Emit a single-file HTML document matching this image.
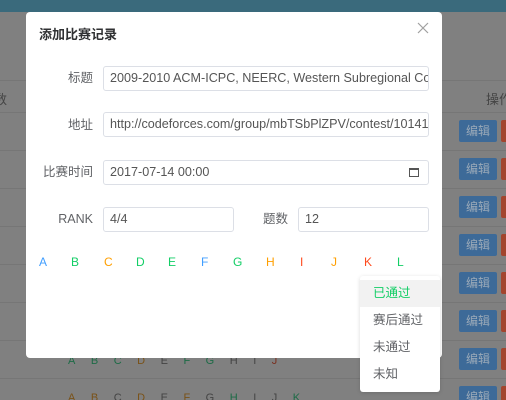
<!DOCTYPE html>
<html><head><meta charset="utf-8"><style>
*{box-sizing:border-box;margin:0;padding:0}
html,body{width:506px;height:400px;overflow:hidden}
body{background:#808080;font-family:"Liberation Sans","Noto Sans CJK SC",sans-serif;position:relative}
.top{position:absolute;left:0;top:0;width:506px;height:12px;background:#3a6a7c}
.line{position:absolute;left:0;width:506px;height:1px;background:#767676}
.btn{position:absolute;left:459px;width:38px;height:22px;background:#3d6a98;border-radius:2px;color:#9aa9b8;font-size:12px;text-align:center;line-height:22px}
.red{position:absolute;left:501px;width:10px;height:22px;background:#a3452e;border-radius:2px}
.bg{position:absolute;font-size:13px;color:#444;white-space:nowrap}
.modal{position:absolute;left:26px;top:12px;width:416px;height:346px;background:#fff;border-radius:4px}
.title{position:absolute;left:13px;top:12px;font-size:13px;font-weight:bold;color:#303133}
.close{position:absolute;left:390px;top:9px;width:14px;height:14px}
.lbl{position:absolute;font-size:12.5px;color:#606266;text-align:right;white-space:nowrap;line-height:16px}
.inp{position:absolute;height:25px;border:1px solid #dcdfe6;border-radius:3px;font-size:12.6px;color:#555;padding-left:6px;line-height:23px;white-space:nowrap;overflow:hidden}
.lt{position:absolute;top:243px;font-size:12px}
.dd{position:absolute;left:360px;top:276px;width:80px;height:116px;background:#fff;border-radius:3px;box-shadow:0 1px 4px rgba(0,0,0,.15)}
.dd div{height:27px;line-height:27px;padding-left:13px;font-size:12.5px;color:#606266}
</style></head><body>
<div class="top"></div>
<div class="line" style="top:80px"></div>
<div class="line" style="top:112px"></div>
<div class="line" style="top:150px"></div>
<div class="line" style="top:188px"></div>
<div class="line" style="top:226px"></div>
<div class="line" style="top:264px"></div>
<div class="line" style="top:302px"></div>
<div class="line" style="top:340px"></div>
<div class="line" style="top:378px"></div>
<div class="bg" style="left:-6px;top:89px">数</div>
<div class="bg" style="left:486px;top:89px">操作</div>
<div class="btn" style="top:120px">编辑</div><div class="red" style="top:120px"></div>
<div class="btn" style="top:158px">编辑</div><div class="red" style="top:158px"></div>
<div class="btn" style="top:196px">编辑</div><div class="red" style="top:196px"></div>
<div class="btn" style="top:234px">编辑</div><div class="red" style="top:234px"></div>
<div class="btn" style="top:272px">编辑</div><div class="red" style="top:272px"></div>
<div class="btn" style="top:310px">编辑</div><div class="red" style="top:310px"></div>
<div class="btn" style="top:348px">编辑</div><div class="red" style="top:348px"></div>
<div class="btn" style="top:386px">编辑</div><div class="red" style="top:386px"></div>
<div class="bg" style="left:68px;top:355px;font-size:11px;letter-spacing:15.5px"><span style="color:#1d6b46">A</span><span style="color:#1d6b46">B</span><span style="color:#1d6b46">C</span><span style="color:#7a5218">D</span><span>E</span><span style="color:#1d6b46">F</span><span style="color:#1d6b46">G</span><span>H</span><span>I</span><span style="color:#7a3020">J</span></div>
<div class="bg" style="left:68px;top:392px;font-size:11px;letter-spacing:15.5px"><span style="color:#7a5218">A</span><span style="color:#7a5218">B</span><span>C</span><span style="color:#7a5218">D</span><span>E</span><span style="color:#7a5218">F</span><span>G</span><span style="color:#1d6b46">H</span><span>I</span><span>J</span><span style="color:#1d6b46">K</span></div>
<div class="modal">
<div class="title">添加比赛记录</div>
<svg class="close" viewBox="0 0 14 14"><path d="M2 2L12 12M12 2L2 12" stroke="#a0a0a0" stroke-width="1.2"/></svg>
<div class="lbl" style="left:0;top:58px;width:67px">标题</div>
<div class="inp" style="left:77px;top:54px;width:326px">2009-2010 ACM-ICPC, NEERC, Western Subregional Contest</div>
<div class="lbl" style="left:0;top:105px;width:67px">地址</div>
<div class="inp" style="left:77px;top:100px;width:326px">http://codeforces.com/group/mbTSbPlZPV/contest/101411</div>
<div class="lbl" style="left:0;top:152px;width:67px">比赛时间</div>
<div class="inp" style="left:77px;top:148px;width:326px">2017-07-14 00:00<span style="position:absolute;right:9px;top:7px;width:10px;height:9px;border:1px solid #555;border-top-width:2px"></span></div>
<div class="lbl" style="left:0;top:199px;width:67px">RANK</div>
<div class="inp" style="left:77px;top:195px;width:131px">4/4</div>
<div class="lbl" style="left:200px;top:199px;width:62px">题数</div>
<div class="inp" style="left:272px;top:195px;width:131px">12</div>
<div class="lt" style="left:13px;color:#409eff">A</div>
<div class="lt" style="left:45px;color:#13ce66">B</div>
<div class="lt" style="left:78px;color:#ff9f00">C</div>
<div class="lt" style="left:110px;color:#13ce66">D</div>
<div class="lt" style="left:142px;color:#13ce66">E</div>
<div class="lt" style="left:175px;color:#409eff">F</div>
<div class="lt" style="left:207px;color:#13ce66">G</div>
<div class="lt" style="left:240px;color:#ff9f00">H</div>
<div class="lt" style="left:274px;color:#ff4a1d">I</div>
<div class="lt" style="left:305px;color:#ff9f00">J</div>
<div class="lt" style="left:338px;color:#ff4a1d">K</div>
<div class="lt" style="left:371px;color:#13ce66">L</div>
</div>
<div class="dd">
<div style="margin-top:4px;background:#f2f2f2;color:#13ce66">已通过</div>
<div>赛后通过</div>
<div>未通过</div>
<div>未知</div>
</div>
</body></html>
